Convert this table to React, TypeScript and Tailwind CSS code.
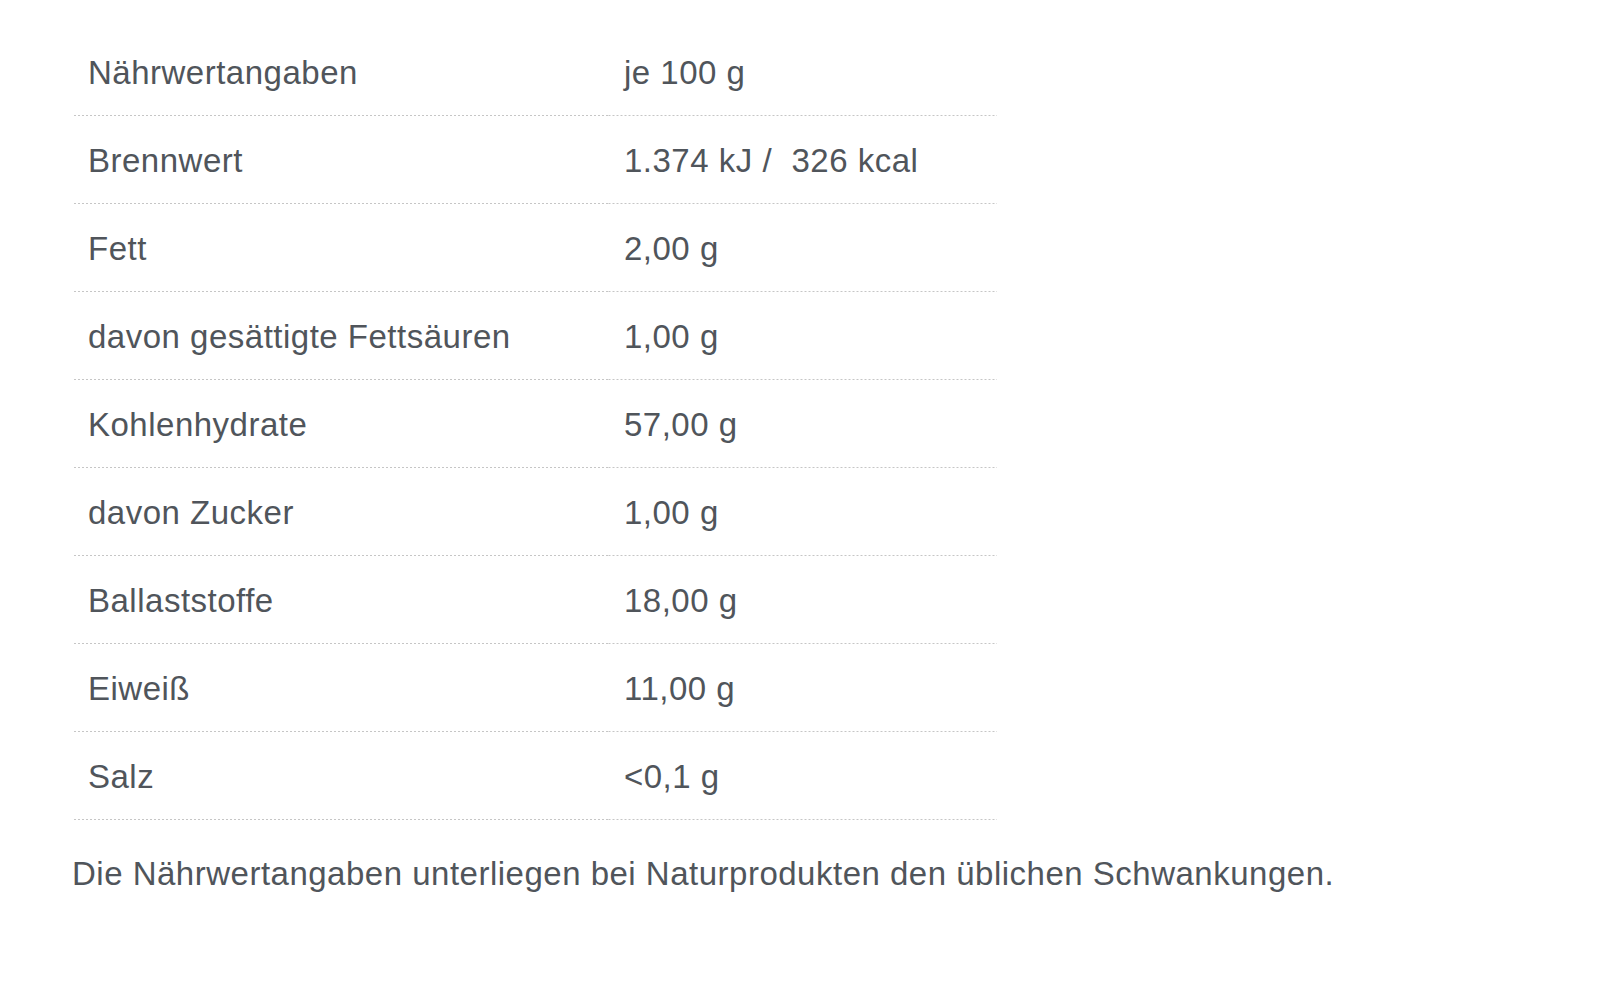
import * as React from 'react';

// Nährwerttabelle mit gepunkteten Trennlinien
const rows: [string, string][] = [
  ['Nährwertangaben', 'je 100 g'],
  ['Brennwert', '1.374 kJ /\u00a0 326 kcal'],
  ['Fett', '2,00 g'],
  ['davon gesättigte Fettsäuren', '1,00 g'],
  ['Kohlenhydrate', '57,00 g'],
  ['davon Zucker', '1,00 g'],
  ['Ballaststoffe', '18,00 g'],
  ['Eiweiß', '11,00 g'],
  ['Salz', '<0,1 g'],
];

const cell =
  'h-[88px] px-4 pt-[2px] align-middle bg-[linear-gradient(to_right,#c6c6c6_50%,transparent_50%)] bg-[length:4px_1px] bg-bottom bg-repeat-x';

export default function App() {
  return (
    <div className="min-h-screen w-full bg-white pt-[28px] pl-[72px] font-['Liberation_Sans',Arial,sans-serif] text-[#50555b] tracking-[0.5px]">
      <table className="w-[925px] border-collapse text-[33px] leading-[40px]">
        <tbody>
          {rows.map(([label, value]) => (
            <tr key={label}>
              <td className={`w-[536px] ${cell}`}>{label}</td>
              <td className={cell}>{value}</td>
            </tr>
          ))}
        </tbody>
      </table>
      <p className="mt-[34px] text-[33px] leading-[40px]">
        Die Nährwertangaben unterliegen bei Naturprodukten den üblichen Schwankungen.
      </p>
    </div>
  );
}
